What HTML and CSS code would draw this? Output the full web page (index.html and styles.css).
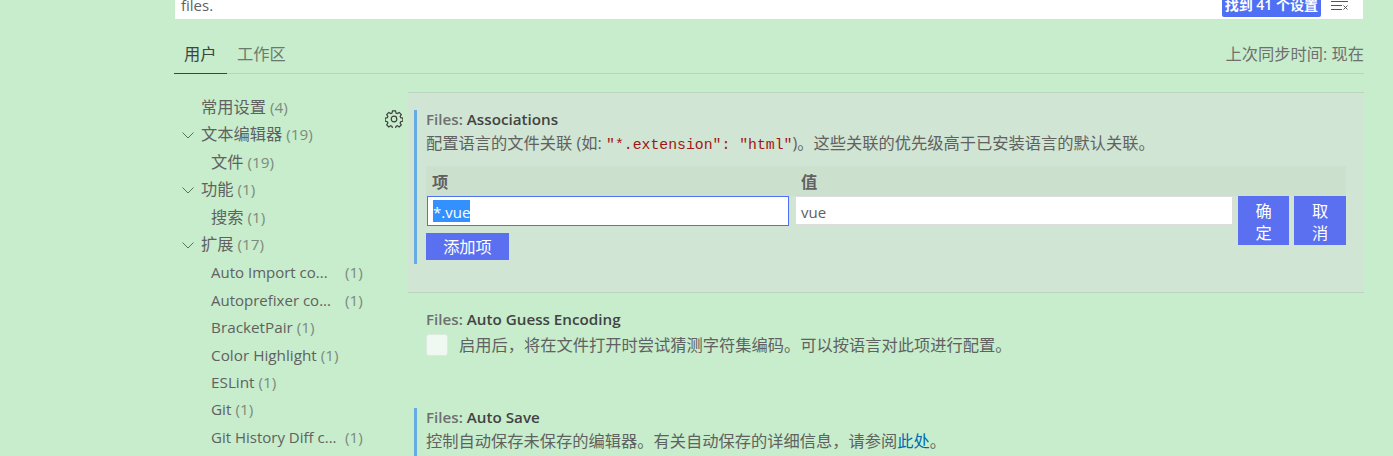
FILE: index.html
```html
<!DOCTYPE html>
<html lang="zh">
<head>
<meta charset="utf-8">
<title>Settings</title>
<link rel="stylesheet" href="styles.css">
</head>
<body>
<div class="page">
  <div class="search">
    <span class="query">files.</span>
    <span class="count">找到 41 个设置</span>
    <svg class="clear" width="18" height="11" viewBox="0 0 18 11"><path d="M0 1.500h17M0 5.500h11M0 9.500h11" stroke="#555" fill="none"/><path d="M12.500 5.500l4 4M16.500 5.500l-4 4" stroke="#555" fill="none"/></svg>
  </div>
  <div class="tabs">
    <span class="tab active">用户</span>
    <span class="tab">工作区</span>
    <span class="sync">上次同步时间: 现在</span>
  </div>
  <div class="body">
    <nav class="nav">
      <div class="row l0 zh">常用设置 <i>(4)</i></div>
      <div class="row l0 zh"><svg class="chev" width="14" height="14" viewBox="0 0 14 14"><path d="M1.500 4.500L7 10l5.500-5.500" fill="none" stroke="#5d6f60"/></svg>文本编辑器 <i>(19)</i></div>
      <div class="row l1 zh">文件 <i>(19)</i></div>
      <div class="row l0 zh"><svg class="chev" width="14" height="14" viewBox="0 0 14 14"><path d="M1.500 4.500L7 10l5.500-5.500" fill="none" stroke="#5d6f60"/></svg>功能 <i>(1)</i></div>
      <div class="row l1 zh">搜索 <i>(1)</i></div>
      <div class="row l0 zh"><svg class="chev" width="14" height="14" viewBox="0 0 14 14"><path d="M1.500 4.500L7 10l5.500-5.500" fill="none" stroke="#5d6f60"/></svg>扩展 <i>(17)</i></div>
      <div class="row l1"><span class="name">Auto Import co...</span><i>(1)</i></div>
      <div class="row l1"><span class="name">Autoprefixer co...</span><i>(1)</i></div>
      <div class="row l1">BracketPair <i>(1)</i></div>
      <div class="row l1">Color Highlight <i>(1)</i></div>
      <div class="row l1">ESLint <i>(1)</i></div>
      <div class="row l1">Git <i>(1)</i></div>
      <div class="row l1"><span class="name">Git History Diff c...</span><i>(1)</i></div>
    </nav>
    <main class="list">
      <section class="setting focused">
        <svg class="gear" width="18" height="18" viewBox="0 0 18 18"><path fill="none" stroke="#3f3f3f" stroke-width="1.200" d="M7.500 .8h3l.5 2.200 1.300.6 1.900-1.200 2.100 2.100-1.200 1.900.6 1.300 2.200.5v3l-2.200.5-.6 1.300 1.200 1.900-2.100 2.100-1.900-1.200-1.300.6-.5 2.200h-3l-.5-2.200-1.300-.6-1.900 1.200-2.100-2.100 1.200-1.900-.6-1.300-2.200-.5v-3l2.200-.5.6-1.300-1.200-1.900 2.100-2.100 1.900 1.200 1.300-.6z"/><circle cx="9" cy="9" r="2.800" fill="none" stroke="#3f3f3f" stroke-width="1.200"/></svg>
        <div class="inner modified">
          <div class="title">Files: <b>Associations</b></div>
          <div class="desc">配置语言的文件关联 (如: <code>"*.extension": "html"</code>)。这些关联的优先级高于已安装语言的默认关联。</div>
          <div class="table">
            <div class="thead"><span class="th key">项</span><span class="th">值</span></div>
            <div class="edit">
              <div class="input key focus"><span class="sel">*.vue</span></div>
              <div class="input val">vue</div>
              <button class="btn small">确定</button>
              <button class="btn small wide">取消</button>
            </div>
          </div>
          <button class="btn add">添加项</button>
        </div>
      </section>
      <section class="setting second">
        <div class="inner">
          <div class="title">Files: <b>Auto Guess Encoding</b></div>
          <div class="check"><span class="box"></span><span>启用后，将在文件打开时尝试猜测字符集编码。可以按语言对此项进行配置。</span></div>
        </div>
      </section>
      <section class="setting third">
        <div class="inner modified">
          <div class="title">Files: <b>Auto Save</b></div>
          <div class="desc">控制自动保存未保存的编辑器。有关自动保存的详细信息，请参阅<a href="#">此处</a>。</div>
        </div>
      </section>
    </main>
  </div>
</div>
</body>
</html>
```
FILE: styles.css
```css
* { box-sizing: border-box; }
html, body { margin: 0; height: 456px; overflow: hidden; }
body {
  background: #c7edcc;
  font-family: "Open Sans", "Noto Sans CJK SC", sans-serif;
  font-size: 14px;
  color: #616161;
}
.page { width: 1190px; margin-left: 174px; height: 456px; overflow: hidden; }

.search {
  height: 20px; margin: 0 1px; background: #fff; border-bottom: 1px solid #dcdcdc;
  display: flex; align-items: flex-start; overflow: hidden;
}
.query { font-size: 15px; line-height: 20px; margin: -5px auto 0 6px; color: #616161; }
.count {
  background: #4f6ff5; color: #fff; font-size: 14px; line-height: 10px; height: 17px;
  padding: 0 3px; border-radius: 0 0 2px 2px; margin-right: 10px; white-space: nowrap; font-weight: 600;
}
.clear { margin: 0 14px 0 0; }

.tabs {
  height: 54px; display: flex; align-items: flex-end;
  border-bottom: 1px solid #b8d6bc;
}
.tab { font-size: 16.250px; line-height: 22px; padding: 0 10px 8px; color: #6b7a6d; height: 30px; }
.tab.active { color: #424242; border-bottom: 1px solid #424242; margin-bottom: -1px; height: 31px; width: 53px; }
.sync { margin-left: auto; font-size: 16.250px; line-height: 22px; padding-bottom: 8px; color: #6f6f6f; }

.body { display: flex; padding-top: 18px; }
.nav { width: 234px; flex: none; padding-top: 2px; }
.row {
  height: 27.4px; line-height: 27.4px; font-size: 15.300px; color: #616161; white-space: nowrap;
  display: flex; align-items: center; gap: 4px; position: relative;
}
.row:not(.zh) { padding-top: 2px; }
.row.zh { font-size: 16.250px; }
.row i { font-style: normal; color: #7d8a7f; font-size: 15.300px; }
.l0 { padding-left: 27px; }
.l1 { padding-left: 37px; }
.name { width: 130px; font-size: 15px; }
.chev { position: absolute; left: 7px; top: 7px; }

.list { flex: 1; min-width: 0; }
.setting { position: relative; }
.focused {
  height: 201px; background: #d0e5d3; border-top: 1px solid #b8d6bc; border-bottom: 1px solid #b8d6bc;
  padding: 17px 0 0 6px;
}
.gear { position: absolute; left: -23px; top: 17px; }
.inner { padding-left: 9px; border-left: 3px solid transparent; }
.modified { border-left-color: #65ace4; }
.focused .inner { height: 154px; }
.third .inner { height: 60px; }
.title { font-size: 15.200px; line-height: 18px; color: #6f6f6f; font-weight: 600; }
.title b { color: #424242; font-weight: 600; }
.desc { font-size: 16.250px; line-height: 22px; margin-top: 4px; color: #616161; white-space: nowrap; }
code { font-family: "Liberation Mono", monospace; font-size: 14.800px; color: #a31515; }
a { color: #006ab1; text-decoration: none; }

.table { width: 920px; margin-top: 10px; }
.thead { height: 30px; background: #cbe0cd; display: flex; align-items: center; }
.th { font-family: "Noto Sans CJK SC", sans-serif; font-weight: 700; font-size: 16.250px; line-height: 28px; color: #616161; padding-left: 6px; }
.th.key { width: 369px; }
.edit { display: flex; gap: 5px; align-items: flex-start; height: 37px; }
.input { height: 29px; background: #fff; font-size: 15px; line-height: 31px; padding-left: 5px; color: #616161; border: 1px solid #dddddd; }
.input.key { width: 362px; height: 30px; margin: 0 1px; }
.focus { border-color: #4f6ff5; padding-left: 5px; color: #fff; display: flex; align-items: center; }
.sel { background: #3390ff; color: #fff; height: 22px; line-height: 25px; display: inline-block; }
.input.val { width: 438px; }
.btn {
  display: block; border: 0; background: #5a70f0; color: #fff; padding: 0; margin: 0;
  font-family: "Noto Sans CJK SC", sans-serif; font-size: 16.250px;
}
.btn.small { width: 51px; height: 49px; line-height: 22px; padding: 0 17px; }
.btn.wide { width: 52px; }
.btn.add { width: 83px; height: 27px; line-height: 27px; }

.second { padding: 17px 0 0 6px; height: 115px; }
.check { display: flex; align-items: center; gap: 11px; margin-top: 6px; font-size: 16.250px; line-height: 22px; color: #616161; white-space: nowrap; }
.box { width: 22px; height: 22px; background: #eff8f1; border: 1px solid #dde9df; border-radius: 3px; flex: none; }
.third { padding: 0 0 0 6px; }
```
